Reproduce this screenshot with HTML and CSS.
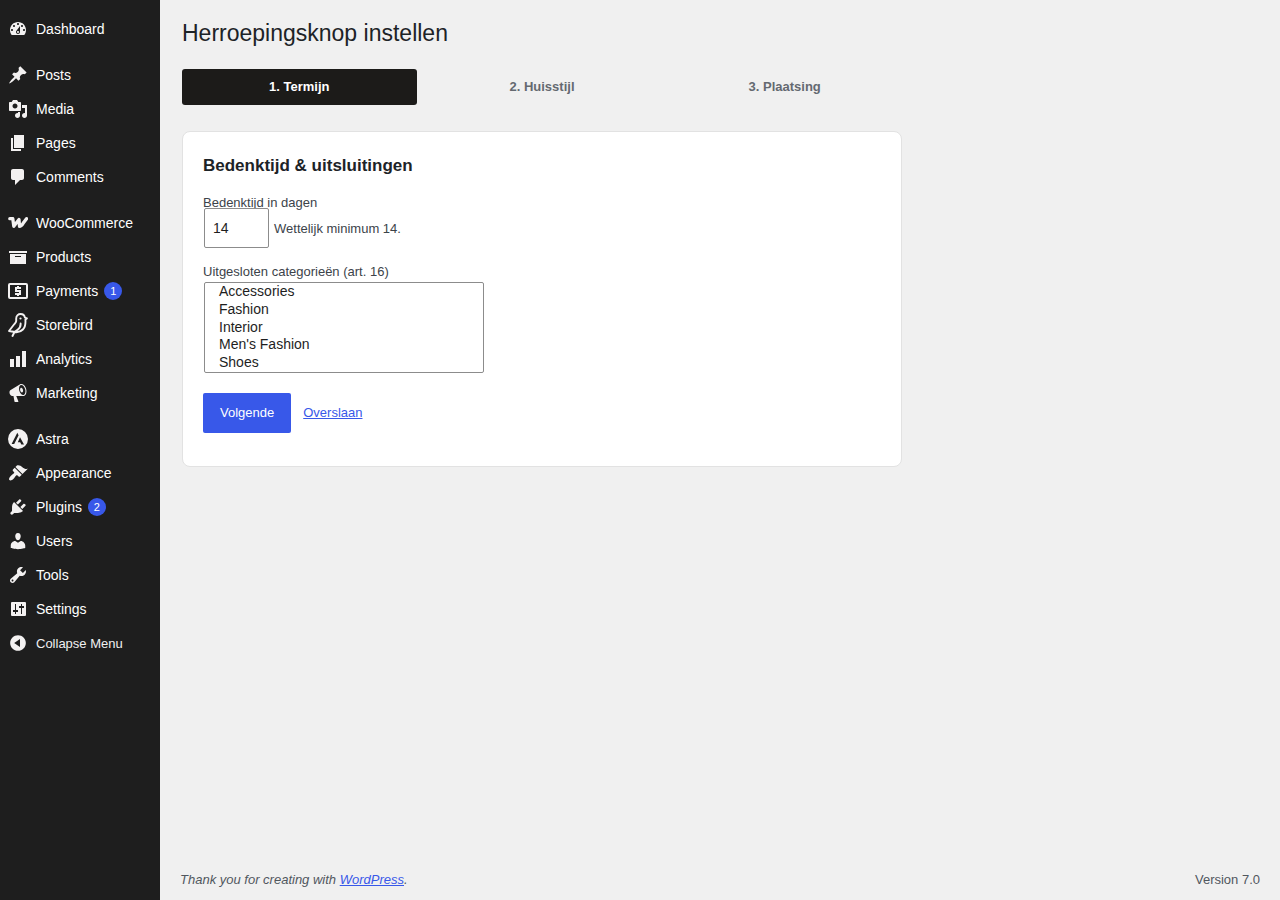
FILE: index.html
```html
<!DOCTYPE html>
<html lang="nl">
<head>
  <meta charset="UTF-8">
  <meta name="viewport" content="width=device-width, initial-scale=1.0">
  <title>Herroepingsknop instellen</title>
  <link rel="stylesheet" href="styles.css">
</head>
<body>
  <nav class="admin-menu">
    <ul>
      <li><a href="#"><svg class="icon" viewBox="0 0 20 20"><path d="M3.76 16h12.48c1.1-1.37 1.76-3.11 1.76-5 0-4.42-3.58-8-8-8s-8 3.58-8 8c0 1.89.66 3.63 1.76 5zM10 4c.55 0 1 .45 1 1s-.45 1-1 1-1-.45-1-1 .45-1 1-1zM6 6c.55 0 1 .45 1 1s-.45 1-1 1-1-.45-1-1 .45-1 1-1zm8 0c.55 0 1 .45 1 1s-.45 1-1 1-1-.45-1-1 .45-1 1-1zm-5.37 5.55L12 7v6c0 1.1-.9 2-2 2s-2-.9-2-2c0-.57.24-1.08.63-1.45zM4 10c.55 0 1 .45 1 1s-.45 1-1 1-1-.45-1-1 .45-1 1-1zm12 0c.55 0 1 .45 1 1s-.45 1-1 1-1-.45-1-1 .45-1 1-1zm-5 3c0-.55-.45-1-1-1s-1 .45-1 1 .45 1 1 1 1-.45 1-1z"/></svg>Dashboard</a></li>
    </ul>
    <ul>
      <li><a href="#"><svg class="icon" viewBox="0 0 20 20"><path d="M10.44 3.02l1.82-1.82 6.36 6.35-1.83 1.82c-1.05-.68-2.48-.57-3.41.36l-.75.75c-.92.93-1.04 2.35-.35 3.41l-1.83 1.82-2.41-2.41-2.8 2.79c-.42.42-3.38 2.71-3.8 2.29s1.86-3.39 2.28-3.81l2.79-2.79L4.1 9.36l1.83-1.82c1.05.69 2.48.57 3.4-.36l.75-.75c.93-.92 1.05-2.35.36-3.41z"/></svg>Posts</a></li>
      <li><a href="#"><svg class="icon" viewBox="0 0 20 20"><path d="M13 11V4c0-.55-.45-1-1-1h-1.67L9 1H5L3.67 3H2c-.55 0-1 .45-1 1v7c0 .55.45 1 1 1h10c.55 0 1-.45 1-1zM7 4.5c1.38 0 2.5 1.12 2.5 2.5S8.38 9.5 7 9.5 4.5 8.38 4.5 7 5.62 4.5 7 4.5zM14 6h5v10.5c0 1.38-1.12 2.5-2.5 2.5S14 17.88 14 16.5s1.12-2.5 2.5-2.5c.17 0 .34.02.5.05V9h-3V6zm-4 8.05V13h2v3.5c0 1.38-1.12 2.5-2.5 2.5S7 17.88 7 16.5 8.12 14 9.5 14c.17 0 .34.02.5.05z"/></svg>Media</a></li>
      <li><a href="#"><svg class="icon" viewBox="0 0 20 20"><path d="M6 15V2h10v13H6zm-1 1h8v2H3V5h2v11z"/></svg>Pages</a></li>
      <li><a href="#"><svg class="icon" viewBox="0 0 20 20"><path d="M5 2h9c1.1 0 2 .9 2 2v7c0 1.1-.9 2-2 2h-2l-5 5v-5H5c-1.1 0-2-.9-2-2V4c0-1.1.9-2 2-2z"/></svg>Comments</a></li>
    </ul>
    <ul>
      <li><a href="#"><svg class="icon line" viewBox="0 0 20 20"><path stroke-width="3.3" d="M1.8 5.7h3l1 7.6L11 6.6l.5 6.7c1.6 0 2.6-1.4 3.600-3l3.400-4.600"/></svg>WooCommerce</a></li>
      <li><a href="#"><svg class="icon" viewBox="0 0 20 20"><path d="M19 4v2H1V4h18zM2 7h16v10H2V7zm11 3V9H7v1h6z"/></svg>Products</a></li>
      <li><a href="#"><svg class="icon line" viewBox="0 0 20 20"><rect x="1" y="3" width="18" height="14" rx="1" stroke-width="2"/><path stroke-width="2" stroke-linecap="butt" stroke-linejoin="miter" d="M13 7H8v3h4v3H7M10 5v2M10 13v2"/></svg>Payments<span class="badge">1</span></a></li>
      <li><a href="#"><svg class="icon tall line" viewBox="0 0 20 24"><path stroke-width="1.9" d="M8.200 8V5.500c0-3 2.200-4.500 4.400-4.500 2.300 0 3.900 1.400 4.300 3.500l2 .9-1.500 1.100c.3 4 0 7.500-2.500 10-1.800 1.900-4 2.700-6.500 2.700L1 18l5-6.500c1.300-1.500 2.200-2 2.200-3.500zM12.600 10.500c.2 2.800-.8 4.700-3 6.200L6.500 19l-2 4"/><circle class="solid" cx="12.500" cy="5.500" r="1.100"/></svg>Storebird</a></li>
      <li><a href="#"><svg class="icon" viewBox="0 0 20 20"><path d="M18 18V2h-4v16h4zm-6 0V7H8v11h4zm-6 0v-8H2v8h4z"/></svg>Analytics</a></li>
      <li><a href="#"><svg class="icon" viewBox="0 0 20 20"><path d="M18.15 5.94c.46 1.62.38 3.22-.02 4.48-.42 1.28-1.26 2.18-2.3 2.48-.16.06-.26.06-.4.06-.06.02-.12.02-.18.02-.06.02-.14.02-.22.02h-6.8l2.22 5.5c.02.14-.06.26-.14.34-.08.1-.24.16-.34.16H6.95c-.1 0-.26-.06-.34-.16-.08-.08-.16-.2-.14-.34l-1-5.5H4.25l-.02-.02c-.5.06-1.08-.18-1.54-.62s-.88-1.08-1.06-1.88c-.24-.8-.2-1.56-.02-2.2.18-.62.58-1.08 1.06-1.3l.02-.02 9-5.4c.1-.06.18-.1.24-.16.06-.04.14-.08.24-.12.16-.08.28-.12.5-.18 1.04-.3 2.24.1 3.22.98s1.84 2.24 2.26 3.86zm-2.58 5.98h-.02c.4-.1.74-.34 1.04-.7.58-.7.86-1.76.86-3.04 0-.64-.1-1.3-.28-1.98-.34-1.36-1.02-2.5-1.78-3.24s-1.68-1.1-2.46-.88c-.82.22-1.4.96-1.7 2-.32 1.04-.28 2.36.06 3.72.38 1.36 1 2.5 1.8 3.24.78.74 1.62 1.1 2.48.88zm-2.54-7.08c.22-.04.42-.02.62.04.38.16.76.48 1.02 1s.42 1.2.42 1.78c0 .3-.04.56-.12.8-.18.48-.44.84-.86.94-.34.1-.8-.06-1.14-.4s-.64-.86-.78-1.5c-.18-.62-.12-1.24.02-1.72s.48-.84.82-.94z"/></svg>Marketing</a></li>
    </ul>
    <ul>
      <li><a href="#"><svg class="icon" viewBox="0 0 20 20"><path fill-rule="evenodd" d="M10 0a10 10 0 1 0 0 20 10 10 0 0 0 0-20zM9.3 3.7l1.3 2.6L6.2 15H3.6zM12 8.2l4 7.2h-2.700l-1.100-2.200h-2.400z"/></svg>Astra</a></li>
      <li><a href="#"><svg class="icon" viewBox="0 0 20 20"><path d="M14.48 11.06L7.41 3.99l1.5-1.5c.5-.56 2.3-.47 3.51.32 1.21.8 1.43 1.28 2.91 2.1 1.18.64 2.45 1.26 4.45.85zm-.71.71L6.7 4.7 4.93 6.47c-.39.39-.39 1.02 0 1.41l1.06 1.06c.39.39.39 1.03 0 1.42-.6.6-1.43 1.11-2.21 1.69-.35.26-.7.53-1.01.84C1.43 14.23.4 16.08 1.4 17.07c.99 1 2.84-.03 4.18-1.36.31-.31.58-.66.85-1.02.57-.78 1.08-1.61 1.69-2.21.39-.39 1.02-.39 1.41 0l1.06 1.06c.39.39 1.02.39 1.41 0z"/></svg>Appearance</a></li>
      <li><a href="#"><svg class="icon" viewBox="0 0 20 20"><path d="M13.11 4.36L9.87 7.6 8 5.73l3.24-3.24c.35-.34 1.05-.2 1.56.32.52.51.66 1.21.31 1.55zm-8 1.77l.91-1.12 9.01 9.01-1.19.84c-.71.71-2.63 1.16-3.82 1.16H6.14L4.9 17.26c-.59.59-1.54.59-2.12 0-.59-.58-.59-1.53 0-2.12l1.24-1.24v-3.88c0-1.13.4-3.19 1.09-3.89zm7.26 3.97l3.24-3.24c.34-.35 1.04-.21 1.55.31.52.51.66 1.21.31 1.55l-3.24 3.25z"/></svg>Plugins<span class="badge">2</span></a></li>
      <li><a href="#"><svg class="icon" viewBox="0 0 20 20"><path d="M10 9.25c-2.27 0-2.73-3.44-2.73-3.44C7 4.02 7.82 2 9.97 2c2.16 0 2.98 2.02 2.71 3.81 0 0-.41 3.44-2.68 3.44zm0 2.57L12.72 10c2.39 0 4.52 2.33 4.52 4.53v2.49s-3.65 1.13-7.24 1.13c-3.65 0-7.24-1.13-7.24-1.13v-2.49c0-2.25 1.94-4.48 4.47-4.48z"/></svg>Users</a></li>
      <li><a href="#"><svg class="icon" viewBox="0 0 20 20"><path d="M16.68 9.77c-1.34 1.34-3.3 1.67-4.95.99l-5.41 6.52c-.99.99-2.59.99-3.58 0s-.99-2.59 0-3.57l6.52-5.42c-.68-1.65-.35-3.61.99-4.95 1.28-1.28 3.12-1.62 4.72-1.06l-2.89 2.89 2.82 2.82 2.86-2.87c.53 1.58.18 3.39-1.08 4.65zM3.81 16.21c.4.39 1.04.39 1.43 0 .4-.4.4-1.04 0-1.43-.39-.4-1.03-.4-1.43 0-.39.39-.39 1.03 0 1.43z"/></svg>Tools</a></li>
      <li><a href="#"><svg class="icon" viewBox="0 0 20 20"><path fill-rule="evenodd" d="M4 3h13a1 1 0 0 1 1 1v12a1 1 0 0 1-1 1H4a1 1 0 0 1-1-1V4a1 1 0 0 1 1-1zM7 5v6H5v2h2v2h1v-2h2v-2H8V5zM13 5v2h-2v2h2v6h1V9h2V7h-2V5z"/></svg>Settings</a></li>
    </ul>
    <button type="button" class="collapse"><svg class="icon" viewBox="0 0 20 20"><path d="M10 2.16c4.33 0 7.84 3.51 7.84 7.84s-3.51 7.84-7.84 7.84S2.16 14.33 2.16 10 5.71 2.16 10 2.16zm2 11.72V6.12L6.18 9.97z"/></svg>Collapse Menu</button>
  </nav>

  <div class="content">
    <main class="wrap">
      <h1>Herroepingsknop instellen</h1>

      <ol class="steps">
        <li class="active">1. Termijn</li>
        <li>2. Huisstijl</li>
        <li>3. Plaatsing</li>
      </ol>

      <form class="card">
        <h2>Bedenktijd &amp; uitsluitingen</h2>
        <div class="field">
          <label for="days">Bedenktijd in dagen</label>
          <div class="days-row">
            <input type="number" id="days" min="14" value="14">
            <span>Wettelijk minimum 14.</span>
          </div>
        </div>
        <div class="field">
          <label class="list-label" for="categories">Uitgesloten categorieën (art. 16)</label>
          <select id="categories" multiple size="5">
            <option>Accessories</option>
            <option>Fashion</option>
            <option>Interior</option>
            <option>Men's Fashion</option>
            <option>Shoes</option>
          </select>
        </div>
        <div class="actions">
          <button type="submit" class="primary">Volgende</button>
          <a href="#">Overslaan</a>
        </div>
      </form>
    </main>

    <footer>
      <em>Thank you for creating with <a href="#">WordPress</a>.</em>
      <span>Version 7.0</span>
    </footer>
  </div>
</body>
</html>
```
FILE: styles.css
```css
body,
nav,
input,
select,
button,
.card,
.admin-menu a {
  box-sizing: border-box;
}

body {
  margin: 0;
  display: flex;
  min-height: 100vh;
  background: #f0f0f0;
  color: #3c434a;
  font-family: "Liberation Sans", Arial, sans-serif;
  font-size: 13px;
}

a {
  color: #3858e9;
}

/* admin menu */
.admin-menu {
  flex: 0 0 160px;
  padding: 12px 0;
  background: #1e1e1e;
}

.admin-menu ul {
  margin: 0 0 12px;
  padding: 0;
  list-style: none;
}

.admin-menu ul:last-of-type {
  margin-bottom: 0;
}

.admin-menu a,
.collapse {
  display: flex;
  align-items: center;
  width: 100%;
  height: 34px;
  padding: 0 8px;
  color: #fff;
  font-size: 14px;
  text-decoration: none;
}

.collapse {
  border: 0;
  background: none;
  color: #f0f0f1;
  font-family: inherit;
  font-size: 13px;
  cursor: pointer;
}

.icon {
  flex: none;
  width: 20px;
  height: 20px;
  margin-right: 8px;
  fill: #f3f1f1;
}

.icon.tall {
  height: 24px;
}

.icon.line {
  fill: none;
  stroke: #f3f1f1;
  stroke-linecap: round;
  stroke-linejoin: round;
}

.icon .solid {
  fill: #f3f1f1;
  stroke: none;
}

.badge {
  min-width: 18px;
  height: 18px;
  margin-left: 6px;
  border-radius: 9px;
  background: #3858e9;
  font-size: 11px;
  line-height: 18px;
  text-align: center;
}

/* content */
.content {
  flex: 1;
  display: flex;
  flex-direction: column;
}

.wrap {
  max-width: 720px;
  padding: 18px 0 0 22px;
}

h1 {
  margin: 0 0 21px;
  color: #1d2327;
  font-size: 23px;
  font-weight: 400;
  line-height: 30px;
}

.steps {
  display: grid;
  grid-template-columns: repeat(3, 1fr);
  gap: 8px;
  margin: 0 0 26px;
  padding: 0;
  list-style: none;
}

.steps li {
  border-radius: 3px;
  color: #646970;
  font-weight: 600;
  line-height: 36px;
  text-align: center;
}

.steps .active {
  background: #1c1b19;
  color: #fff;
}

.card {
  padding: 21px 20px 33px;
  border: 1px solid #e2e2e2;
  border-radius: 8px;
  background: #fff;
}

h2 {
  margin: 0 0 19px;
  color: #1d2327;
  font-size: 17px;
  line-height: 26px;
}

.field {
  margin-bottom: 19px;
}

.field label {
  display: block;
  line-height: 10px;
}

.field .list-label {
  margin-bottom: 5px;
}

.days-row {
  display: flex;
  align-items: center;
  gap: 5px;
  padding-left: 1px;
}

input,
select {
  border: 1px solid #8c8c8c;
  border-radius: 2px;
  background: #fff;
  color: #1e1e1e;
  font-family: inherit;
  font-size: 14px;
}

input {
  width: 65px;
  height: 40px;
  padding: 0 8px;
}

select {
  display: block;
  width: 280px;
  max-width: 100%;
  margin-left: 1px;
  padding: 0 24px 0 12px;
}

.actions {
  display: flex;
  align-items: center;
  gap: 12px;
  margin-top: 20px;
}

.primary {
  height: 40px;
  padding: 0 17px;
  border: 0;
  border-radius: 2px;
  background: #3858e9;
  color: #fff;
  font-family: inherit;
  font-size: 13px;
  cursor: pointer;
}

footer {
  display: flex;
  justify-content: space-between;
  margin-top: auto;
  padding: 10px 20px;
  color: #50575e;
  line-height: 20px;
}
```
